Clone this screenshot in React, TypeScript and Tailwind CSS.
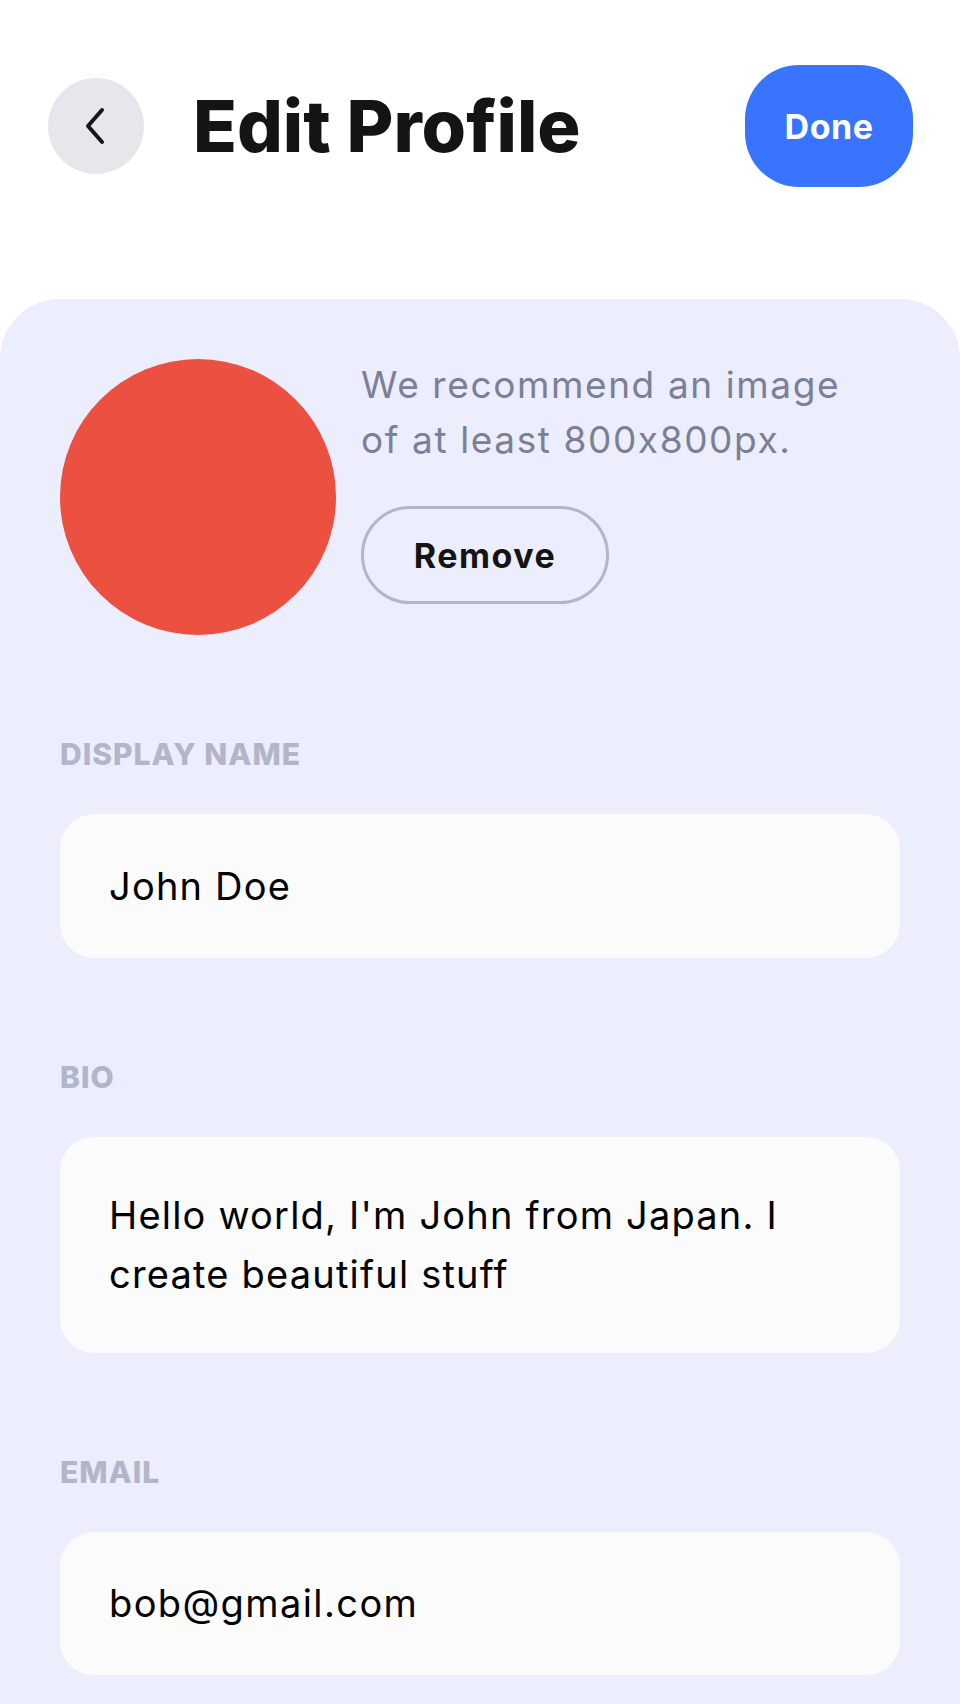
import React from "react";

export default function App() {
  return (
    <div
      className="w-[960px] min-h-[1704px] bg-white flex flex-col [font-feature-settings:'calt'_0]"
      style={{ fontFamily: 'Inter, "Noto Sans", sans-serif' }}
    >
      {/* Header */}
      <div className="mt-[65px] h-[122px] flex items-center pl-[48px] pr-[47px]">
        <button className="w-[96px] h-[96px] rounded-full bg-[#E6E7EB] flex items-center justify-center">
          <svg width="26" height="40" viewBox="0 0 26 40" fill="none" className="-ml-[2px]">
            <path
              d="M20 4 L6 20 L20 36"
              stroke="#161616"
              strokeWidth="4"
              strokeLinecap="round"
              strokeLinejoin="round"
            />
          </svg>
        </button>
        <h1 className="ml-[49px] text-[72px] leading-none font-extrabold text-[#141414] tracking-[0px]">
          Edit Profile
        </h1>
        <button className="ml-auto w-[168px] h-[122px] rounded-[54px] bg-[#3874FF] text-white text-[34px] font-bold tracking-[0.5px] flex items-center justify-center">
          Done
        </button>
      </div>

      {/* Card */}
      <div className="mt-[112px] flex-1 bg-[#ECEDFD] rounded-t-[60px] pt-[60px] px-[60px] pb-[30px]">
        <div className="flex items-start">
          <div className="w-[276px] h-[276px] rounded-full bg-[#EB5040] shrink-0" />
          <div className="ml-[25px] -mt-[2px] flex flex-col items-start">
            <p className="text-[37px] leading-[55px] text-[#7B8096] tracking-[1.6px]">
              We recommend an image
              <br />
              of at least 800x800px.
            </p>
            <button className="mt-[39px] w-[248px] h-[98px] rounded-full border-[3px] border-[#B4B6C7] text-[34px] font-bold text-[#141414] tracking-[1.5px] flex items-center justify-center">
              Remove
            </button>
          </div>
        </div>

        <Label className="mt-[104px]">DISPLAY NAME</Label>
        <div className="mt-[44px] w-[840px] h-[144px] rounded-[34px] bg-[#FBFBFC] flex items-center pl-[49px] text-[38px] tracking-[1.2px] text-black">
          John Doe
        </div>

        <Label className="mt-[104px]">BIO</Label>
        <div className="mt-[44px] w-[840px] h-[216px] rounded-[34px] bg-[#FBFBFC] flex items-center pl-[49px] text-[38px] leading-[59px] tracking-[1.2px] text-black">
          <p>
            Hello world, I'm John from Japan. I
            <br />
            create beautiful stuff
          </p>
        </div>

        <Label className="mt-[104px]">EMAIL</Label>
        <div className="mt-[44px] w-[840px] h-[143px] rounded-[34px] bg-[#FBFBFC] flex items-center pl-[49px] text-[38px] tracking-[1.4px] text-black">
          bob@gmail.com
        </div>
      </div>
    </div>
  );
}

function Label({ children, className = "" }: { children: React.ReactNode; className?: string }) {
  return (
    <div className={`text-[30px] leading-[31px] font-extrabold tracking-[1px] text-[#B3B6C8] ${className}`}>
      {children}
    </div>
  );
}
